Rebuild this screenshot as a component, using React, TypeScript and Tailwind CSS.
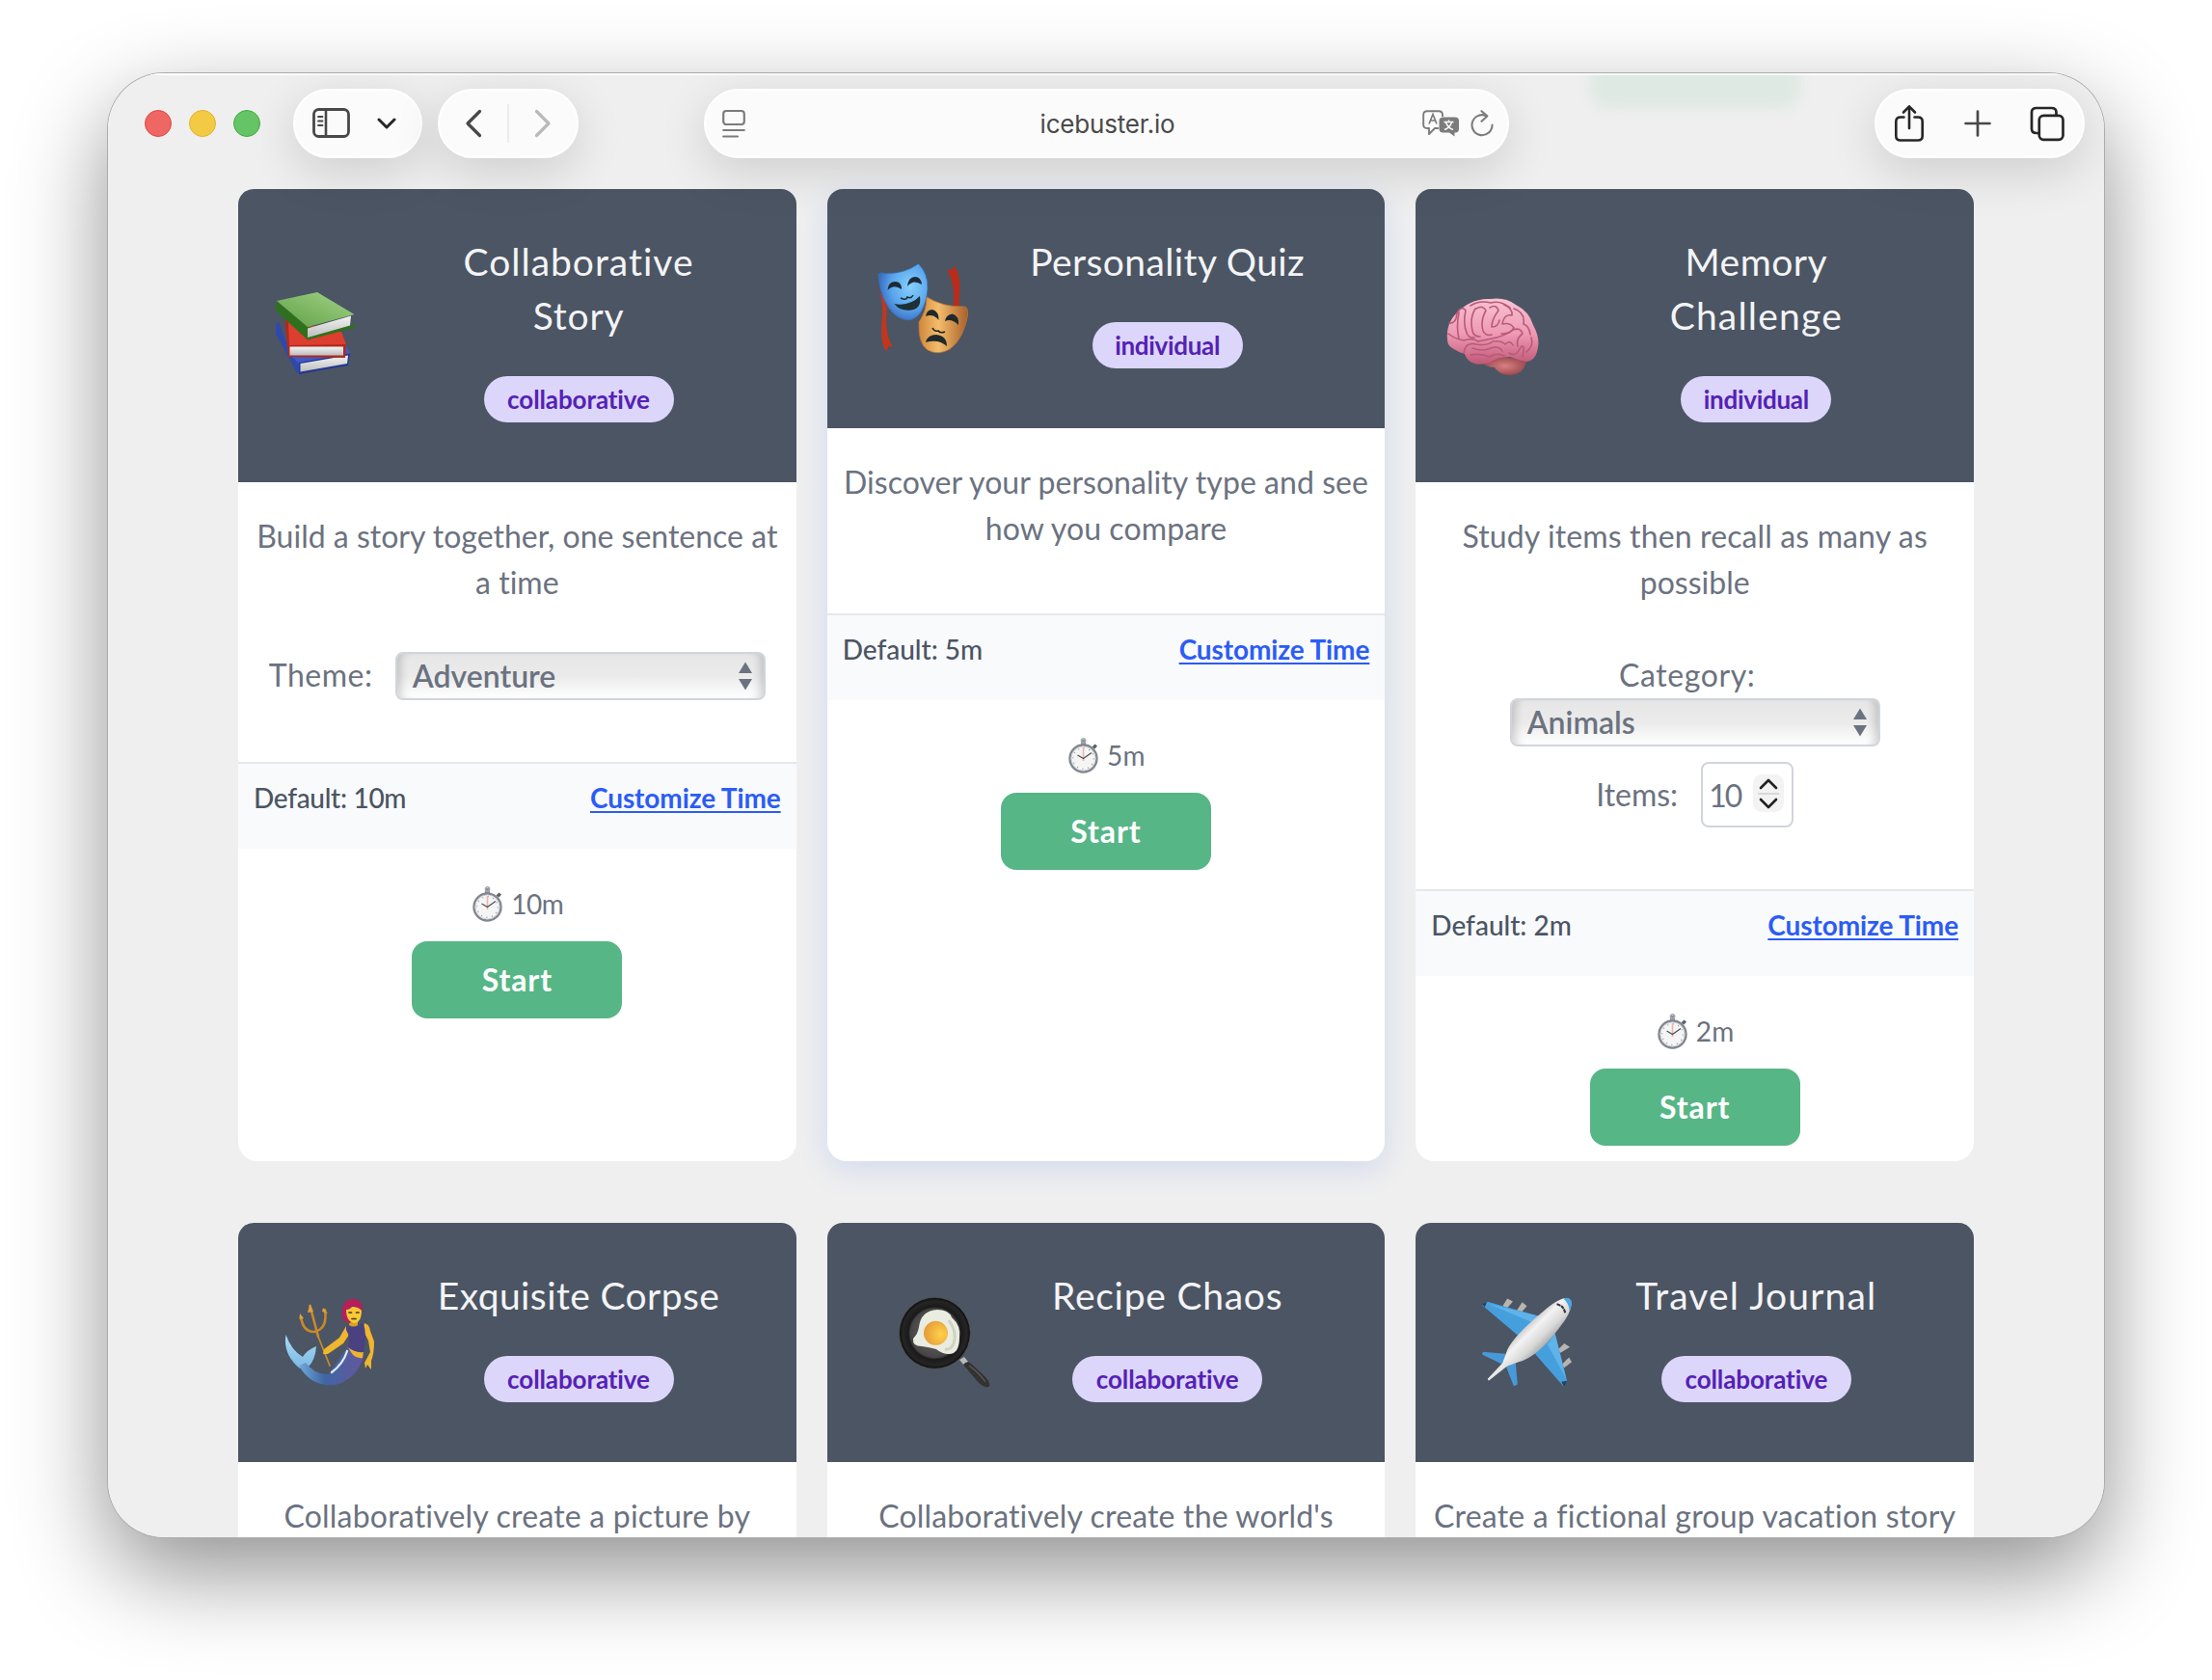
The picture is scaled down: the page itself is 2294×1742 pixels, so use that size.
import type { ReactNode } from "react";

function Books() {
  return (
    <svg viewBox="0 0 96 96" className="h-24 w-24">
      <defs>
        <linearGradient id="bk-green" x1="0" y1="1" x2="1" y2="0">
          <stop offset="0" stopColor="#5f9f45" />
          <stop offset="1" stopColor="#a3d488" />
        </linearGradient>
        <linearGradient id="bk-page" x1="0" y1="0" x2="0" y2="1">
          <stop offset="0" stopColor="#f4f4f4" />
          <stop offset="1" stopColor="#bdbdbd" />
        </linearGradient>
      </defs>
      <path d="M7 36 L10 34 L20 60 L31 76 L31 88 L29 87 L7 46Z" fill="#2f49ab" />
      <path d="M20 66 L80 58 L84 66 L31 77Z" fill="#4059c4" />
      <path d="M31 76 L84 66.500 L82 79 L31 88Z" fill="#24388f" />
      <path d="M32.500 77 L82 68.500 L81 77 L32.500 85.500Z" fill="url(#bk-page)" />
      <path d="M16.500 32 L75 44 L80 57 L79 71 L20 70Z" fill="#b02a1e" />
      <path d="M20 33 L75 44 L80 57 L21 58Z" fill="#dc3f2f" />
      <path d="M21.500 59.500 H77 V68.500 H21.500Z" fill="url(#bk-page)" />
      <path d="M7 12 L40 39 L89 37 L90 39.500 L40 52.500 L7 22Z" fill="#2f701d" />
      <path d="M8 12 L50 3 L88.500 26 L40 39Z" fill="url(#bk-green)" />
      <path d="M40 40.500 L85 27.500 L84 37.500 L40 50Z" fill="url(#bk-page)" />
    </svg>
  );
}

function Masks() {
  return (
    <svg viewBox="0 0 96 96" className="h-24 w-24">
      <defs>
        <radialGradient id="mk-blue" cx="0.65" cy="0.4" r="0.65">
          <stop offset="0" stopColor="#86d0fb" />
          <stop offset="0.6" stopColor="#5aa6ec" />
          <stop offset="1" stopColor="#3a6cc0" />
        </radialGradient>
        <linearGradient id="mk-gold" x1="0" y1="0" x2="1" y2="0">
          <stop offset="0" stopColor="#cf873a" />
          <stop offset="0.4" stopColor="#f4bd6c" />
          <stop offset="1" stopColor="#a9602a" />
        </linearGradient>
      </defs>
      <path d="M2 29 Q8 40 5.500 62 Q4 80 8 89 L11 92 L12 87 L17 88 Q10 78 10 58 L11 44Z" fill="#c2361e" />
      <path d="M73 8 L78 8 L81 3 Q87 14 86.500 28 L85 50 L79 50 Q83 24 73 8Z" fill="#b92c19" />
      <path d="M2 12 Q4 10 9 11.500 Q29 12 43.500 1.500 Q54 12 53 28 Q50 57 34 60 Q17 60 7 37 Q2 24 2 12Z" fill="url(#mk-blue)" stroke="#3a6cb0" strokeWidth="0.800" />
      <path d="M11.500 29 Q12 20 19.500 20 Q26 20 26 28 Q18 22 11.500 29Z M32 25 Q33 15 40 15 Q46 15 47 23 Q38 17 32 25Z" fill="#1b2b38" />
      <path d="M25 37 Q31 40 32 36 Q36 38 38 34" fill="none" stroke="#1b2b38" strokeWidth="1.500" />
      <path d="M18.500 43 Q34 46 45 35 Q47 48 36 49.500 Q24 51 18.500 43Z" fill="#1d3137" />
      <path d="M52 36 Q68 46 90 46 Q95 45 94.500 55 Q90 80 76 90 Q64 97 53 91 Q43 84 44 62 Q52 50 52 36Z" fill="url(#mk-gold)" stroke="#b9763a" strokeWidth="0.800" />
      <path d="M51 56 Q52 49 58 49 Q65 51 64.500 60 Q59 53 51 56Z M71 61 Q72 54 79 53.500 Q86 56 85 65 Q78 58 71 61Z" fill="#20282b" />
      <path d="M58 68 Q60 72 64 71 Q66 74 71 72" fill="none" stroke="#26241f" strokeWidth="1.600" />
      <path d="M51 83 Q53 75 62 75 Q73 76 73 87 Q64 79 51 83Z" fill="#1f2a2c" />
    </svg>
  );
}

function Brain() {
  return (
    <svg viewBox="0 0 96 96" className="h-24 w-24">
      <defs>
        <linearGradient id="br" x1="0" y1="0" x2="0" y2="1">
          <stop offset="0" stopColor="#f8c3d3" />
          <stop offset="0.55" stopColor="#ee98b3" />
          <stop offset="1" stopColor="#bf5876" />
        </linearGradient>
        <radialGradient id="br-stem">
          <stop offset="0" stopColor="#d97f83" />
          <stop offset="1" stopColor="#9c4c4f" />
        </radialGradient>
      </defs>
      <path d="M38 77 Q44 73 60 70 L83 74 Q80 89 65 89 Q54 88 50 81 Q43 81 38 77Z" fill="url(#br-stem)" />
      <path d="M1 52 Q-1 32 17 19 Q30 9 46 10 Q61 8 72 16 Q86 23 90 37 Q97 50 95 60 Q93 74 83 75 Q76 74 66 70 Q52 70 45 76 Q24 82 19 67 Q12 65 6 61 Q1 58 1 52Z" fill="url(#br)" />
      <g fill="none" stroke="#b85a78" strokeWidth="1.600" strokeLinecap="round" strokeLinejoin="round">
        <path d="M3 35 Q10 36 11 25 Q16 16 20 22 Q17 36 21 45 Q23 51 29 50" />
        <path d="M13 24 Q10 40 13 51" />
        <path d="M30 20 Q24 30 27 43 Q28 49 35 49 M31 20 Q38 16 41 22 Q35 33 38 43 Q41 49 47 47" />
        <path d="M45 19 Q52 15 54 22 Q47 31 47 39 Q54 39 55 32 M60 16 Q69 20 68 27 Q60 25 58 36 Q66 34 70 40 Q66 47 57 46" />
        <path d="M25 17 Q34 11 46 14 Q56 11 66 19 M70 20 Q82 24 80 36 Q86 38 87 47" />
        <path d="M2 46 Q8 51 18 53 Q27 50 33 54 Q43 52 52 50 Q63 47 69 42 Q77 39 79 46 Q72 51 74 59" />
        <path d="M18 66 Q20 54 31 57 Q42 59 48 54 Q57 53 61 57 Q66 52 69 58" />
        <path d="M27 61 Q38 65 46 61 Q54 58 58 64 M25 68 Q36 66 45 70 Q52 65 60 69 M65 66 Q72 71 77 60 Q82 56 79 70 M88 50 Q91 59 83 65" />
      </g>
    </svg>
  );
}

function Merperson() {
  return (
    <svg viewBox="0 0 96 96" className="h-24 w-24">
      <defs>
        <linearGradient id="mp-tail" x1="0" y1="0" x2="1" y2="0">
          <stop offset="0" stopColor="#6fa9dc" />
          <stop offset="0.4" stopColor="#3f66a4" />
          <stop offset="1" stopColor="#65569c" />
        </linearGradient>
        <linearGradient id="mp-fin" x1="0" y1="0" x2="0" y2="1">
          <stop offset="0" stopColor="#a9dcf7" />
          <stop offset="1" stopColor="#7db8e2" />
        </linearGradient>
      </defs>
      <g fill="none" stroke="#c78a2a" strokeWidth="2.600" strokeLinecap="round">
        <path d="M27.500 10 L36 42" />
        <path d="M36 42 L48 72" strokeWidth="1.800" />
        <path d="M18 21 Q20 37 32 37 Q46 34 43 14" />
      </g>
      <path d="M25 17 L27.500 8 L31 16Z M16.500 24 L17 18 L21 23Z M40 16 L41 12 L46 18Z" fill="#dba23c" />
      <path d="M2.500 40 Q-1 60 17 75 Q21 70 25 74 Q33 67 34 52 Q24 56 20 63 Q8 56 2.500 40Z" fill="url(#mp-fin)" />
      <path d="M16 72 L23 69 Q33 82 47 81 Q57 66 67 52 L83 63 Q76 86 54 92 Q29 95 16 72Z" fill="url(#mp-tail)" />
      <path d="M50 79 Q62 70 66 57" fill="none" stroke="#dbeefa" strokeWidth="2.200" strokeLinecap="round" />
      <path d="M65 31 L58 43 L42 55 L41 60 L46 60 L62 49 L68 40Z M84 28 Q89 29 90 36 L94 47 Q94 60 91 67 L91 76 L87 71 L85 75 L84 69 L90 58 L88 46 L82 34Z" fill="#f0b62f" />
      <path d="M67 52 Q74 59 83 57 L82 64 Q72 66 67 52Z" fill="#edb42f" />
      <path d="M65 31 Q72 33 78 30 L83 28 Q87 42 83 58 Q74 59 67 53 Q70 43 65 35Z" fill="#4a4181" />
      <path d="M69 24 H77 V30 Q73 33 68 30Z" fill="#dca025" />
      <path d="M61 24 Q59 5 70 3 Q81 1 82 14 L78 24 L68 28Z" fill="#b41f5c" />
      <path d="M65 14 Q69 14 71 11 Q78 11 81 15 Q81 27 74 28 Q65 27 65 14Z" fill="#fac936" />
      <path d="M68 17 h2.500 M75.500 17 h2.500 M71 23.500 h4" stroke="#4b3414" strokeWidth="1.700" strokeLinecap="round" />
    </svg>
  );
}

function FryingPan() {
  return (
    <svg viewBox="0 0 96 96" className="h-24 w-24 overflow-visible">
      <defs>
        <radialGradient id="fp-pan">
          <stop offset="0" stopColor="#6a6868" />
          <stop offset="0.68" stopColor="#464444" />
          <stop offset="0.74" stopColor="#1a1a1a" />
          <stop offset="0.9" stopColor="#252525" />
          <stop offset="1" stopColor="#0c0c0c" />
        </radialGradient>
        <radialGradient id="fp-yolk" cx="0.7" cy="0.55" r="0.7">
          <stop offset="0" stopColor="#ffd24a" />
          <stop offset="1" stopColor="#e59a38" />
        </radialGradient>
      </defs>
      <path d="M64 66 L69 63 L73 68 L69 72Z" fill="#b9b9b5" />
      <path d="M68 71 Q71 67 75 69 L87 80 Q97 89 95 93.500 Q92 96 84 90Z" fill="#333231" />
      <path d="M74 72 Q84 79 91 89" fill="none" stroke="#5d5b59" strokeWidth="1.300" />
      <circle cx="38.400" cy="38.300" r="37" fill="url(#fp-pan)" stroke="#555" strokeWidth="0.800" />
      <path d="M41 14 Q53 14 56 22 Q66 31 64 43 Q64 60 53 60 Q46 60 40 55 Q33 53 25 52 Q15 52 16 44 Q21 39 22 32 Q24 15 41 14Z" fill="#e9ece0" />
      <path d="M53 25 Q62 37 58 49 Q55 56 49 55" fill="none" stroke="#cfd3bd" strokeWidth="3" />
      <circle cx="39.500" cy="38.300" r="12.500" fill="url(#fp-yolk)" />
    </svg>
  );
}

function Airplane() {
  return (
    <svg viewBox="0 0 96 96" className="h-24 w-24">
      <defs>
        <linearGradient id="ap" x1="0.300" y1="0.300" x2="0.700" y2="0.700">
          <stop offset="0" stopColor="#8f8f8f" />
          <stop offset="0.4" stopColor="#f3f3f3" />
          <stop offset="0.65" stopColor="#d8d8d8" />
          <stop offset="1" stopColor="#7f7f7f" />
        </linearGradient>
      </defs>
      <path d="M27 1 L33 4 L27 11 L22 9Z M43 5 L48 9 L42 16 L37 14Z M88 49 L94 53 L84 59 L81 56Z M93 64 L96 69 L88 75 L85 72Z" fill="#b8b5b0" />
      <path d="M0 8 L6 4.500 L62 20 L39 41Z M78 38 L91 89 L88 96 L54 57Z" fill="#469fdd" />
      <path d="M5 6 L62 20 L55 27Z M78 38 L90 87 L70 50Z" fill="#5fb2ea" />
      <path d="M0 7 L5 5 L3 10Z M91 89 L88 96 L85 90Z" fill="#24425f" />
      <path d="M1 58 L25 60 L23 72 L0 61Z M25 72 L36 70 L38 93 L34 95Z" fill="#4799d8" />
      <path d="M85 1.500 Q92 -1 95 3 Q98 13 83 32 Q59 64 39 69 Q30 72 26 74 L7 89 L6 87 L22 70 Q24 64 27 56 Q34 41 64 16 Q76 5 85 1.500Z" fill="url(#ap)" />
      <path d="M87 1 Q93 -1 95.500 3 Q97 8 93.500 14 Q93 6 87 1Z" fill="#4aa7e6" />
      <path d="M80 7 Q88 9 89 17" fill="none" stroke="#333" strokeWidth="2.200" strokeDasharray="4 0.800" />
    </svg>
  );
}

function Stopwatch() {
  return (
    <svg viewBox="0 0 31 37" className="h-[37px] w-[31px]">
      <path d="M24.500 9.500 L27.500 6.500 L30 8.500 L27.500 11.500Z" fill="#59616b" />
      <rect x="13" y="2" width="5" height="7" rx="1" fill="#8d9299" />
      <circle cx="15.500" cy="3" r="2.200" fill="none" stroke="#a4a8ad" strokeWidth="1.400" />
      <circle cx="15.500" cy="21.500" r="14" fill="#f5f5f5" stroke="#82878f" strokeWidth="2.400" />
      <circle cx="15.500" cy="21.500" r="12.500" fill="none" stroke="#c9ced8" strokeWidth="0.800" />
      <circle cx="15.500" cy="21.500" r="10.800" fill="none" stroke="#9b9b9b" strokeWidth="1.300" strokeDasharray="1 4.650" />
      <path d="M15.500 24 V10" stroke="#f0b3a5" strokeWidth="1.600" />
      <path d="M9.500 18 L15.500 21.500 L24 15.500" fill="none" stroke="#4e5358" strokeWidth="1.300" />
    </svg>
  );
}

interface Line {
  text: string;
  tracking: string;
}

interface CardHeaderProps {
  icon: ReactNode;
  iconOffset: string;
  title: Line[];
  badge: string;
}

function CardHeader({ icon, iconOffset, title, badge }: CardHeaderProps) {
  return (
    <div className="grid grid-cols-[162px_382px] items-center rounded-t-2xl bg-[#4c5563] pt-[47px] pb-[62px]">
      {/* nudged down so the icon sits on the header's centre line */}
      <div className={`mt-[15px] flex ${iconOffset}`}>{icon}</div>
      <div className="flex flex-col items-center">
        <h2 className="text-center text-[39px] leading-[56px] text-[#f3f4f6]">
          {title.map((line) => (
            <span key={line.text} className={`block whitespace-nowrap ${line.tracking}`}>
              {line.text}
            </span>
          ))}
        </h2>
        <span
          className={`mt-[35px] flex h-12 items-center justify-center rounded-full bg-[#dcd6fa] text-[26px] font-bold text-[#5521b5] ${
            badge === "individual" ? "w-[156px] tracking-[-0.3px]" : "w-[197px] tracking-[-0.1px]"
          }`}
        >
          {badge}
        </span>
      </div>
    </div>
  );
}

function Description({ lines }: { lines: Line[] }) {
  return (
    <p className="pt-8 text-center text-[32px] leading-[48px] text-[#6b7280]">
      {lines.map((line) => (
        <span key={line.text} className={`block whitespace-nowrap ${line.tracking}`}>
          {line.text}
        </span>
      ))}
    </p>
  );
}

function SelectBox({ value }: { value: string }) {
  return (
    <div className="flex h-[50px] w-[384px] items-center justify-between rounded-lg border-2 border-[#d1d5db] bg-[linear-gradient(to_bottom,#e6e6e6,#ebebeb_50%,#fff)] pr-[12px] pl-4 text-[32px] font-semibold text-[#6b7280] shadow-[inset_10px_0_8px_-6px_rgba(0,0,0,0.16),inset_-10px_0_8px_-6px_rgba(0,0,0,0.16)]">
      <span className="leading-[46px]">{value}</span>
      <svg viewBox="0 0 14 30" className="h-[30px] w-[14px]" fill="#6b7280">
        <path d="M0 12 L7 0.500 L14 12Z M0 18 L7 29.500 L14 18Z" />
      </svg>
    </div>
  );
}

function NumberBox({ value }: { value: number }) {
  return (
    <div className="flex h-[68px] w-24 items-center justify-between rounded-lg border-2 border-[#d1d5db] bg-white pr-2 pb-1 pl-1.5 text-[32px] text-[#6b7280]">
      <span className="pt-1.5 tracking-[-2px]">{value}</span>
      <svg viewBox="0 0 32 39" className="h-[39px] w-8" fill="none">
        <rect width="32" height="39" rx="9" fill="#f3f3f3" />
        <path d="M5 20 H27" stroke="#d9d9d9" strokeWidth="2" />
        <path d="M8 14 L16 6 L24 14 M8 26 L16 34 L24 26" stroke="#222" strokeWidth="2.600" strokeLinecap="round" strokeLinejoin="round" />
      </svg>
    </div>
  );
}

function CardFooter({ time }: { time: string }) {
  return (
    <>
      <div className="flex h-[90px] items-start justify-between border-t-2 border-[#e5e7eb] bg-[#f9fafc] px-4 pt-3.5 text-[28px] leading-[42px]">
        <span className={`font-medium text-[#4b5563] ${time === "10m" ? "tracking-[-0.3px]" : ""}`}>Default: {time}</span>
        <a className="font-bold tracking-[-0.1px] text-[#2b5cf6] underline decoration-2 underline-offset-[3px]">Customize Time</a>
      </div>
      <div className="flex flex-col items-center pt-9 pb-4">
        <div className="flex h-[42px] items-center gap-[9px] pl-0.5 text-[28px] leading-[42px] text-[#6b7280]">
          <Stopwatch />
          <span className={time === "10m" ? "tracking-[-0.4px]" : "tracking-[0.3px]"}>{time}</span>
        </div>
        <button className="mt-[18px] h-20 w-[218px] rounded-2xl bg-[#56b686] text-[32px] font-bold tracking-[0.9px] text-white">
          Start
        </button>
      </div>
    </>
  );
}

function Card({ children, hovered }: { children: ReactNode; hovered?: boolean }) {
  return (
    <article className={`rounded-[20px] bg-white ${hovered ? "shadow-[0_8px_30px_rgba(80,130,235,0.19)]" : ""}`}>
      {children}
    </article>
  );
}

function Pill({ className, children }: { className: string; children: ReactNode }) {
  return (
    <div
      className={`flex h-[72px] items-center rounded-full border-2 border-white bg-[#fbfbfb] shadow-[0_14px_50px_rgba(0,0,0,0.14)] ${className}`}
    >
      {children}
    </div>
  );
}

function Toolbar() {
  return (
    <header className="relative z-10 flex h-[120px] items-start pt-4">
      <div className="mt-[22px] ml-[38px] flex gap-[18px]">
        <span className="size-7 rounded-full border border-[#e2453f] bg-[#ee6765]" />
        <span className="size-7 rounded-full border border-[#e3b02a] bg-[#f3ca44]" />
        <span className="size-7 rounded-full border border-[#3fae3f] bg-[#65c466]" />
      </div>

      <Pill className="ml-[34px] w-[134px] pl-[18px]">
        <svg viewBox="0 0 40 32" className="h-8 w-10" fill="none" stroke="#484848">
          <rect x="1.500" y="1.500" width="36" height="28" rx="5" strokeWidth="2.800" />
          <path d="M14 2 V29" strokeWidth="2.600" />
          <path d="M6 9 H10.500 M6 13.500 H10.500 M6 18 H10.500" strokeWidth="1.800" strokeLinecap="round" />
        </svg>
        <svg viewBox="0 0 20 12" className="ml-[27px] h-3 w-5" fill="none" stroke="#262626" strokeWidth="3" strokeLinecap="round" strokeLinejoin="round">
          <path d="M2 2 L10 10 L18 2" />
        </svg>
      </Pill>

      <Pill className="ml-4 w-[146px] pl-[26px]">
        <svg viewBox="0 0 18 30" className="h-[30px] w-[18px]" fill="none" stroke="#484848" strokeWidth="3.200" strokeLinecap="round" strokeLinejoin="round">
          <path d="M15.500 2.500 L3 15 L15.500 27.500" />
        </svg>
        <span className="ml-[26px] h-10 w-0.5 bg-[#ececec]" />
        <svg viewBox="0 0 18 30" className="ml-[26px] h-[30px] w-[18px]" fill="none" stroke="#bababa" strokeWidth="3.200" strokeLinecap="round" strokeLinejoin="round">
          <path d="M2.500 2.500 L15 15 L2.500 27.500" />
        </svg>
      </Pill>

      <Pill className="ml-[130px] w-[835px] justify-between pr-[14px] pl-[17px]">
        <svg viewBox="0 0 24 30" className="h-[30px] w-16 pr-10" fill="none" stroke="#7c7c7c" strokeWidth="2.200" strokeLinecap="round">
          <rect x="1.200" y="2" width="21.600" height="14" rx="3" />
          <path d="M1.200 22 H22.800 M1.200 28.500 H16" />
        </svg>
        <span className="pt-px pl-[9px] font-[Inter,sans-serif] text-[26px] tracking-[-0.2px] text-[#4a4a4a]">icebuster.io</span>
        <div className="flex items-center gap-[11px]">
          <svg viewBox="0 0 39 28" className="h-7 w-[39px]" fill="none">
            <path d="M17 19 H13 L7 25 V19 H5 Q1.200 19 1.200 15.500 V5 Q1.200 1.200 5 1.200 H17 Q21 1.200 21 5 V7" stroke="#7c7c7c" strokeWidth="1.900" strokeLinejoin="round" />
            <path d="M7 14.500 L11 4.500 L15 14.500 M8.500 11 H13.500" stroke="#7c7c7c" strokeWidth="1.700" />
            <path d="M22 7.500 H34 Q38 7.500 38 11.500 V19.500 Q38 23.500 34.500 23.500 H33.500 V27.500 L28 23.500 H21.500 Q17.500 23.500 17.500 19.500 V11.500 Q17.500 7.500 22 7.500Z" fill="#7c7c7c" />
            <path d="M22.500 12.500 H32.500 M27.500 10.500 V12.500 M30.500 13 Q28.500 18.500 23 20.500 M24.500 13 Q26.500 18.500 32 20.500" stroke="#fbfbfb" strokeWidth="1.500" />
          </svg>
          <svg viewBox="0 0 24 28" className="h-7 w-6" fill="none" stroke="#7c7c7c" strokeWidth="2.100" strokeLinecap="round" strokeLinejoin="round">
            <path d="M16.500 6.200 A10.500 10.500 0 1 0 22.500 15.500" />
            <path d="M11.500 1.200 L17.300 6.400 L11.500 11.800" />
          </svg>
        </div>
      </Pill>

      <Pill className="ml-[379px] w-[218px] pl-[18px]">
        <svg viewBox="0 0 32 40" className="h-10 w-8" fill="none" stroke="#262626" strokeWidth="2.600" strokeLinecap="round" strokeLinejoin="round">
          <path d="M10.500 13.500 H7 Q2.300 13.500 2.300 18 V33 Q2.300 37.500 7 37.500 H25 Q29.700 37.500 29.700 33 V18 Q29.700 13.500 25 13.500 H21.500" />
          <path d="M16 25 V2.500 M10 8.500 L16 2.300 L22 8.500" />
        </svg>
        <svg viewBox="0 0 28 28" className="ml-[41px] size-7" fill="none" stroke="#484848" strokeWidth="2.700" strokeLinecap="round">
          <path d="M14 1.500 V26.500 M1.500 14 H26.500" />
        </svg>
        <svg viewBox="0 0 37 37" className="ml-[40px] size-[37px]" fill="none" stroke="#262626" strokeWidth="2.700">
          <rect x="9.800" y="9.800" width="24.700" height="25" rx="4.500" />
          <path d="M9.500 28 H7 Q2 28 2 23.500 V6.500 Q2 2 7 2 H22.500 Q27.500 2 27.500 6.500 V9.500" />
        </svg>
      </Pill>
    </header>
  );
}

export default function App() {
  return (
    <div className="h-[1742px] w-[2294px] overflow-hidden bg-white pt-[76px] pl-[112px] font-[Lato,sans-serif] [font-variant-ligatures:no-common-ligatures]">
      <div className="h-[1518px] w-[2070px] rounded-[58px] shadow-[0_0_0_1px_#acacac,0_36px_96px_rgba(0,0,0,0.44)]">
        <div className="relative h-full w-full overflow-hidden rounded-[58px] bg-[#efefef]">
          {/* scrolled button showing through behind the toolbar */}
          <div className="absolute -top-8 left-[1538px] h-[68px] w-[216px] rounded-2xl bg-[#dde9e2] blur-[7px]" />
          <div className="absolute inset-x-0 top-0 h-0.5 bg-white/80" />
          <Toolbar />

          <main className="ml-[135px] grid w-[1800px] grid-cols-3 gap-x-8 gap-y-16">
            <Card>
              <CardHeader
                icon={<Books />}
                iconOffset="ml-8"
                title={[
                  { text: "Collaborative", tracking: "tracking-[1px]" },
                  { text: "Story", tracking: "tracking-[0.8px]" },
                ]}
                badge="collaborative"
              />
              <Description
                lines={[
                  { text: "Build a story together, one sentence at", tracking: "tracking-normal" },
                  { text: "a time", tracking: "tracking-normal" },
                ]}
              />
              <div className="mt-12 mb-16 flex items-start justify-center text-[32px] leading-[48px] text-[#6b7280]">
                <span className="w-[131px] tracking-[0.5px]">Theme:</span>
                <SelectBox value="Adventure" />
              </div>
              <CardFooter time="10m" />
            </Card>

            <Card hovered>
              <CardHeader
                icon={<Masks />}
                iconOffset="ml-[51px]"
                title={[{ text: "Personality Quiz", tracking: "tracking-[0.4px]" }]}
                badge="individual"
              />
              <Description
                lines={[
                  { text: "Discover your personality type and see", tracking: "tracking-[0.05px]" },
                  { text: "how you compare", tracking: "tracking-[0.1px]" },
                ]}
              />
              <div className="h-16" />
              <CardFooter time="5m" />
            </Card>

            <Card>
              <CardHeader
                icon={<Brain />}
                iconOffset="ml-8"
                title={[
                  { text: "Memory", tracking: "tracking-[0.5px]" },
                  { text: "Challenge", tracking: "tracking-[1.2px]" },
                ]}
                badge="individual"
              />
              <Description
                lines={[
                  { text: "Study items then recall as many as", tracking: "tracking-[0.13px]" },
                  { text: "possible", tracking: "tracking-normal" },
                ]}
              />
              <div className="mt-12 mb-16 flex flex-col items-center text-[32px] leading-[48px] text-[#6b7280]">
                <span className="pr-4 tracking-[0.6px]">Category:</span>
                <SelectBox value="Animals" />
                <div className="mt-4 flex items-center">
                  <span className="w-[109px]">Items:</span>
                  <NumberBox value={10} />
                </div>
              </div>
              <CardFooter time="2m" />
            </Card>

            {/* the second row runs past the bottom edge of the window */}
            <Card>
              <CardHeader
                icon={<Merperson />}
                iconOffset="ml-[47px]"
                title={[{ text: "Exquisite Corpse", tracking: "tracking-[0.4px]" }]}
                badge="collaborative"
              />
              <Description
                lines={[
                  { text: "Collaboratively create a picture by", tracking: "tracking-[0.2px]" },
                ]}
              />
              <div className="h-16" />
            </Card>

            <Card>
              <CardHeader
                icon={<FryingPan />}
                iconOffset="ml-[73px]"
                title={[{ text: "Recipe Chaos", tracking: "tracking-[0.75px]" }]}
                badge="collaborative"
              />
              <Description
                lines={[
                  { text: "Collaboratively create the world's", tracking: "tracking-[0.15px]" },
                ]}
              />
              <div className="h-16" />
            </Card>

            <Card>
              <CardHeader
                icon={<Airplane />}
                iconOffset="ml-[69px]"
                title={[{ text: "Travel Journal", tracking: "tracking-[1.15px]" }]}
                badge="collaborative"
              />
              <Description
                lines={[
                  { text: "Create a fictional group vacation story", tracking: "tracking-[0.2px]" },
                ]}
              />
              <div className="h-16" />
            </Card>
          </main>
        </div>
      </div>
    </div>
  );
}
